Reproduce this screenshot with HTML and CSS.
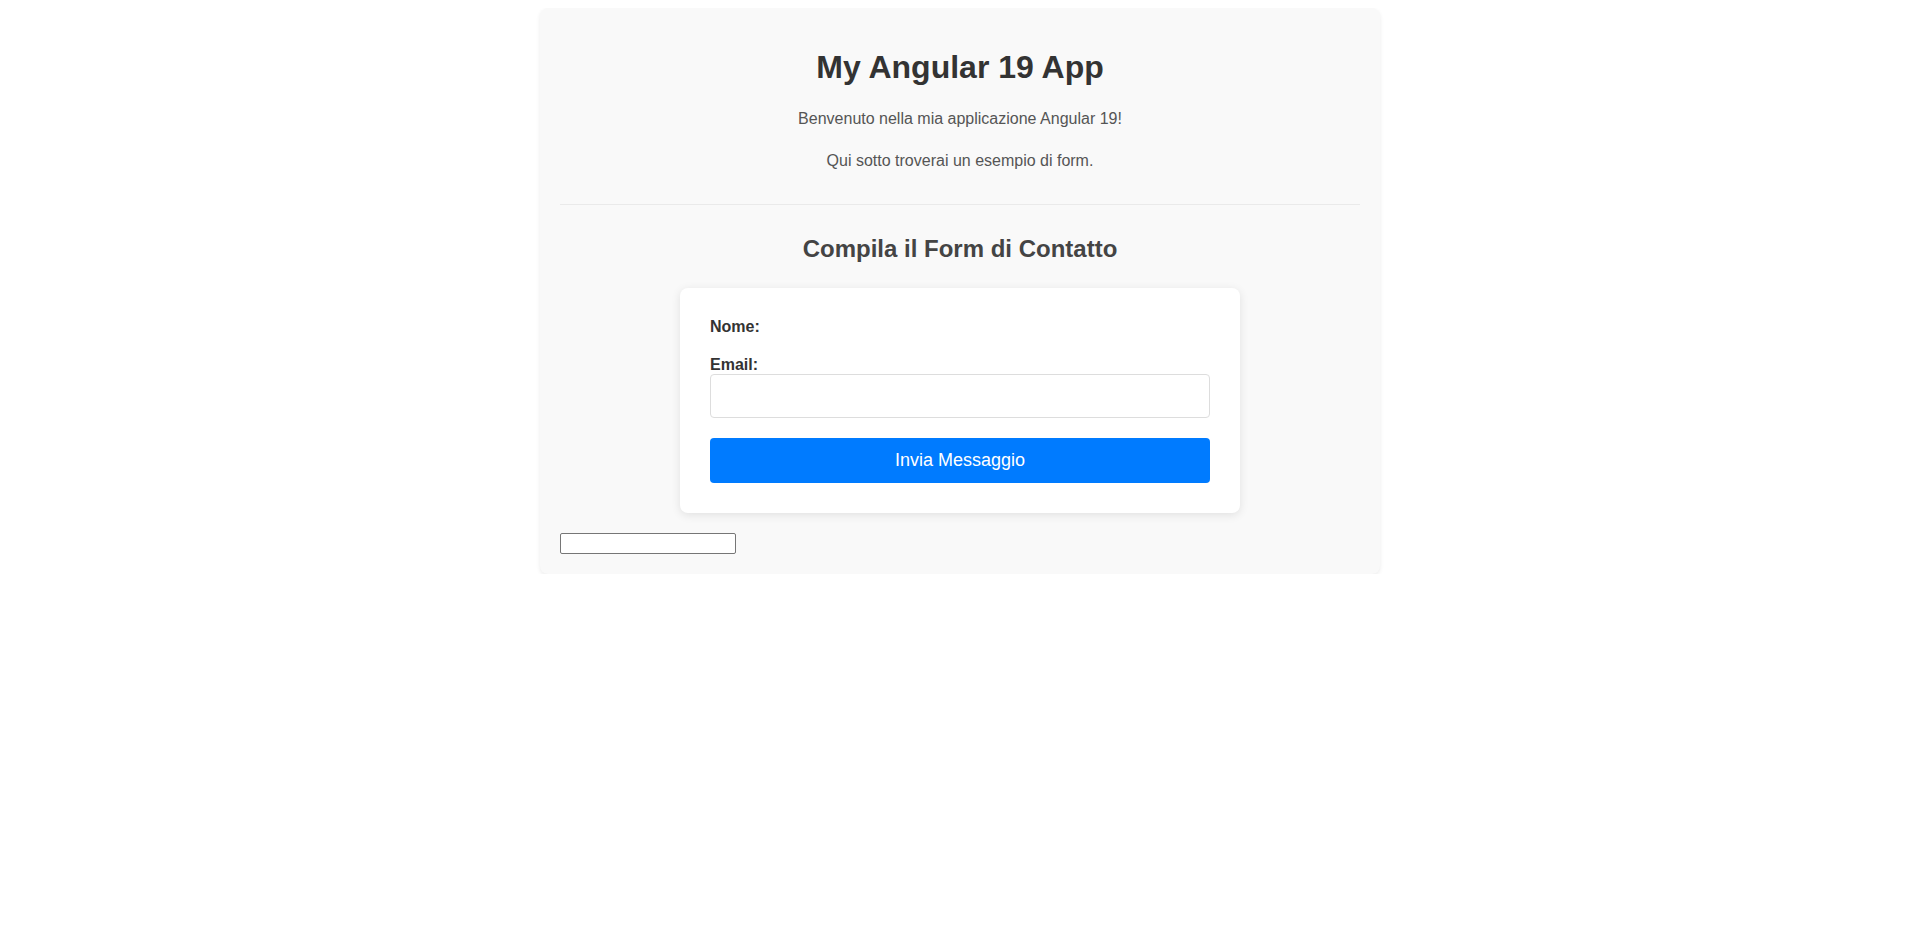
FILE: index.html
```html
<!DOCTYPE html>
<html lang="it">
<head>
<meta charset="utf-8">
<title>My Angular 19 App</title>
<link rel="stylesheet" href="styles.css">
</head>
<body>
<div class="container">
  <h1 class="title">My Angular 19 App</h1>
  <p class="intro">Benvenuto nella mia applicazione Angular 19!</p>
  <p class="intro">Qui sotto troverai un esempio di form.</p>
  <hr class="divider">
  <h2 class="form-title">Compila il Form di Contatto</h2>
  <form class="contact-card" onsubmit="return false">
    <div class="form-group">
      <label class="field-label">Nome:</label>
    </div>
    <div class="form-group">
      <label class="field-label" for="email">Email:</label>
      <input class="field-input" id="email" type="email">
    </div>
    <button class="submit-btn" type="submit">Invia Messaggio</button>
  </form>
  <input class="plain-input" type="text">
</div>
</body>
</html>
```
FILE: styles.css
```css
body {
  margin: 8px;
  font-family: "Liberation Sans", Arial, sans-serif;
  background: #ffffff;
}

.container {
  max-width: 800px;
  margin: 0 auto;
  padding: 20px;
  background: #f9f9f9;
  border-radius: 8px;
  box-shadow: 0 2px 4px rgba(0, 0, 0, 0.08);
}

.title {
  font-size: 32px;
  font-weight: bold;
  color: #333333;
  text-align: center;
  margin: 21.44px 0 20px;
  line-height: normal;
}

.intro {
  font-size: 16px;
  color: #555555;
  text-align: center;
  line-height: 1.6;
  margin: 16px 0;
}

.divider {
  border: 0;
  border-top: 1px solid #eaeaea;
  margin: 30px 0;
  height: 0;
}

.form-title {
  font-size: 24px;
  font-weight: bold;
  color: #444444;
  text-align: center;
  margin: 0 0 25.4px;
  line-height: normal;
}

.contact-card {
  max-width: 500px;
  margin: 0 auto 20px;
  padding: 30px;
  background: #ffffff;
  border-radius: 8px;
  box-shadow: 0 2px 10px rgba(0, 0, 0, 0.1);
}

.form-group {
  margin-bottom: 20px;
}

.field-label {
  display: block;
  font-size: 16px;
  font-weight: bold;
  color: #333333;
  line-height: normal;
}

.field-input {
  display: block;
  width: 100%;
  height: 44px;
  box-sizing: border-box;
  padding: 12px;
  font-size: 14px;
  font-family: "Liberation Sans", Arial, sans-serif;
  border: 1px solid #dddddd;
  border-radius: 4px;
  background: #ffffff;
}

.submit-btn {
  display: block;
  width: 100%;
  padding: 12px;
  font-size: 18px;
  font-family: "Liberation Sans", Arial, sans-serif;
  color: #ffffff;
  background: #007bff;
  border: none;
  border-radius: 4px;
  line-height: normal;
  cursor: pointer;
}

.plain-input {
  display: block;
  width: 176px;
  height: 21px;
  box-sizing: border-box;
  border: 1px solid #767676;
  border-radius: 2px;
  background: #ffffff;
  padding: 1px 2px;
  margin: 0;
}
```
